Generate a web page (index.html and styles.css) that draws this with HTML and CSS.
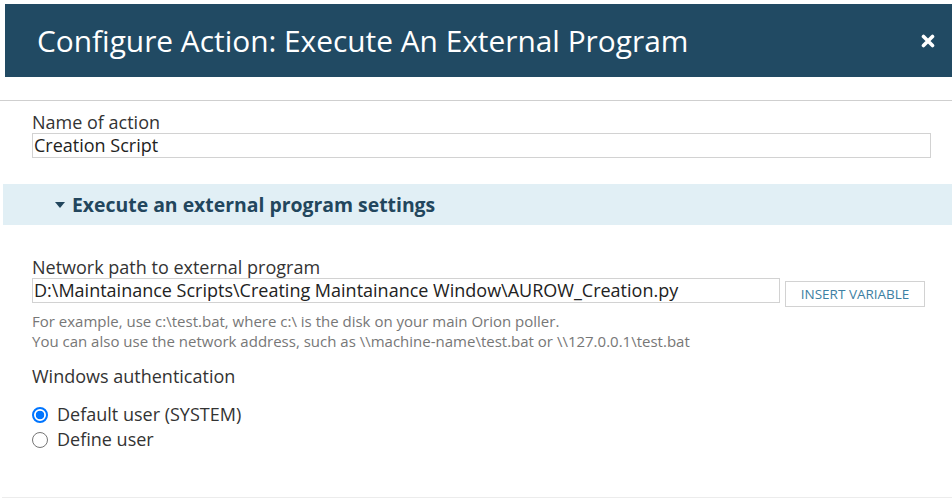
FILE: index.html
```html
<!DOCTYPE html>
<html>
<head>
<meta charset="utf-8">
<link rel="stylesheet" href="styles.css">
</head>
<body>
<div class="dialog">
  <div class="header">
    <h1 class="title">Configure Action: Execute An External Program</h1>
    <svg class="close" width="14" height="14" viewBox="0 0 14 14"><path d="M2.5 2.5 L11.5 11.5 M11.5 2.5 L2.5 11.5" stroke="#fff" stroke-width="3.6" stroke-linecap="round"/></svg>
  </div>
  <div class="divider"></div>
  <div class="field name-field">
    <label class="label">Name of action</label>
    <div class="input">Creation Script</div>
  </div>
  <div class="section">
    <span class="caret"></span>
    <span class="section-title">Execute an external program settings</span>
  </div>
  <div class="field path-field">
    <label class="label">Network path to external program</label>
    <div class="path-row">
      <div class="input path-input">D:\Maintainance Scripts\Creating Maintainance Window\AUROW_Creation.py</div>
      <button class="btn">INSERT VARIABLE</button>
    </div>
    <p class="help">For example, use c:\test.bat, where c:\ is the disk on your main Orion poller.<br>You can also use the network address, such as \\machine-name\test.bat or \\127.0.0.1\test.bat</p>
  </div>
  <div class="field auth-field">
    <div class="label">Windows authentication</div>
    <div class="radios">
      <label class="radio"><span class="dot checked"></span>Default user (SYSTEM)</label>
      <label class="radio"><span class="dot"></span>Define user</label>
    </div>
  </div>
  <div class="footer-line"></div>
</div>
</body>
</html>
```
FILE: styles.css
```css
html, body {
  margin: 0;
  padding: 0;
  background: #fff;
}
body {
  font-family: "Open Sans", "Liberation Sans", sans-serif;
  color: #333;
  width: 952px;
  height: 499px;
  overflow: hidden;
}
.header {
  margin: 4px 0 0 5px;
  height: 73px;
  background: #214a63;
  display: flex;
  align-items: center;
  justify-content: space-between;
  padding: 0 17px 0 32px;
}
.title {
  margin: 0;
  font-weight: 400;
  font-size: 29.85px;
  color: #fff;
}
.close {
  display: block;
  margin-top: 1px;
}
.divider {
  margin-top: 23px;
  border-top: 1px solid #cfcfcf;
}
.field {
  padding: 0 21px 0 32px;
}
.label {
  display: block;
  font-size: 18px;
  line-height: 22px;
  color: #333;
}
.name-field {
  padding-top: 10px;
}
.input {
  border: 1px solid #d2d2d2;
  height: 23px;
  line-height: 23px;
  font-size: 18px;
  padding: 0 1px;
  color: #222;
  white-space: nowrap;
  overflow: hidden;
}
.section {
  margin: 26px 0 0 3px;
  height: 41px;
  background: #e1eff5;
  display: flex;
  align-items: center;
  padding-left: 52px;
  gap: 7px;
}
.caret {
  width: 0;
  height: 0;
  border-left: 5px solid transparent;
  border-right: 5px solid transparent;
  border-top: 6px solid #22465d;
  margin-top: 1px;
}
.section-title {
  font-weight: 700;
  font-size: 19.4px;
  color: #22465d;
}
.path-field {
  padding-top: 31px;
  padding-right: 27px;
}
.path-row {
  display: flex;
  align-items: flex-start;
  gap: 5px;
}
.path-input {
  width: 745px;
}
.btn {
  margin-top: 3px;
  width: 140px;
  height: 26px;
  background: #fff;
  border: 1px solid #d2d2d2;
  font-family: "Open Sans", "Liberation Sans", sans-serif;
  font-size: 13.5px;
  color: #3d7fa3;
  padding: 0;
}
.help {
  margin: 4px 0 0;
  font-size: 15px;
  line-height: 20px;
  color: #777;
}
.auth-field {
  padding-top: 14px;
}
.radios {
  margin-top: 15px;
  display: flex;
  flex-direction: column;
}
.radio {
  display: flex;
  align-items: center;
  font-size: 18px;
  line-height: 25px;
  color: #333;
}
.dot {
  box-sizing: border-box;
  width: 16px;
  height: 16px;
  border-radius: 50%;
  border: 1px solid #767676;
  margin: 0 9px 0 0;
  background: #fff;
}
.dot.checked {
  border: 2px solid #0075ff;
  background: radial-gradient(circle, #0075ff 0 4px, #fff 4.6px);
}
.footer-line {
  position: absolute;
  left: 2px;
  right: 0;
  top: 497px;
  border-top: 1px solid #ececec;
}
```
